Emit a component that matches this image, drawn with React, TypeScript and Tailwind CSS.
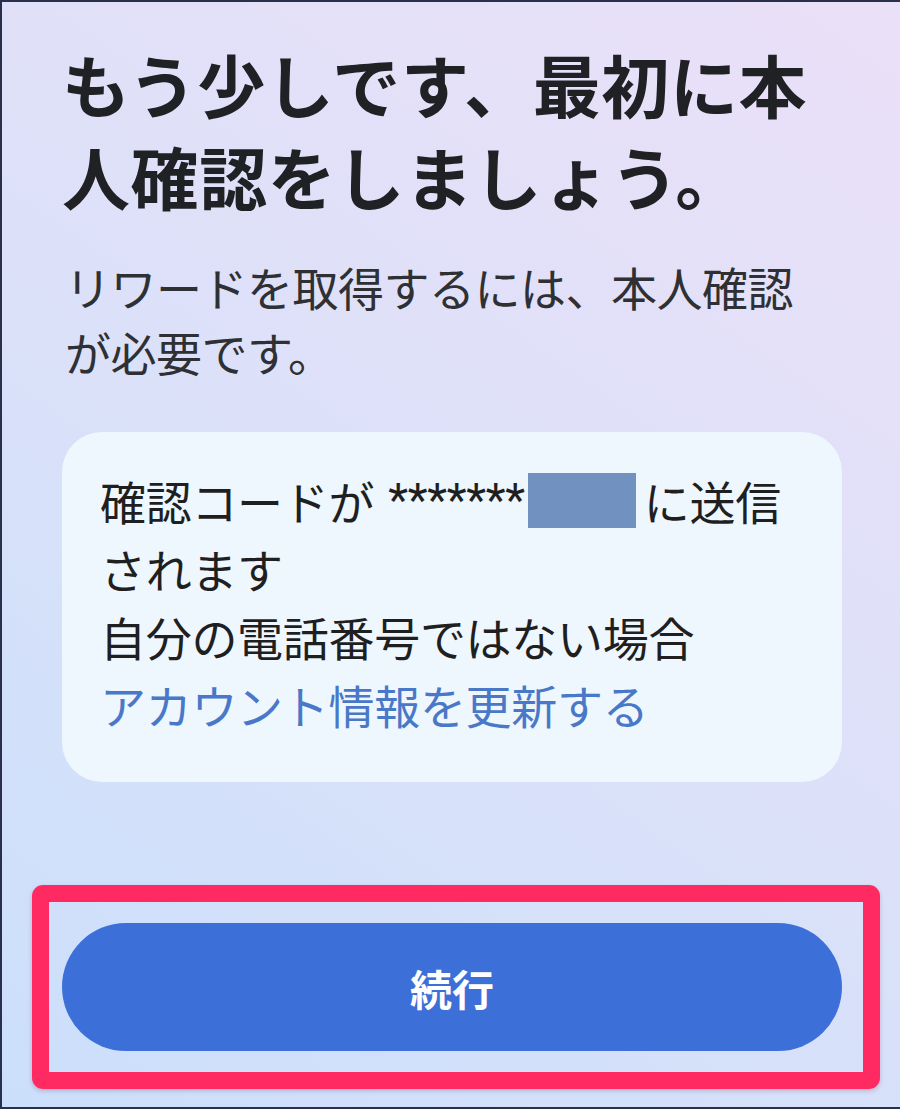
import React from "react";

const jp = "font-['Noto_Sans_CJK_JP','Noto_Sans',sans-serif]";

export default function App() {
  return (
    <div
      className={`${jp} w-[900px] h-[1109px] overflow-hidden border-l-2 border-t-2 border-b-2 border-[#2a2f4c] bg-linear-[215deg] from-[#ebe0f8] via-[#dae1f9] via-55% to-[#cbdffb] flex flex-col`}
    >
      <h1 className="pl-[60px] pt-[36px] text-[68px] leading-[92px] font-bold text-[#202124] tracking-[0.6px]">
        もう少しです、最初に本
        <br />
        人確認をしましょう。
      </h1>
      <p className="mt-[32px] pl-[63px] text-[46px] leading-[65px] text-[#2f3033] tracking-[-0.5px]">
        リワードを取得するには、本人確認
        <br />
        が必要です。
      </p>
      <div className="mt-[48px] ml-[60px] w-[780px] h-[350px] rounded-[40px] bg-[#eef6fe] pl-[38px] pt-[34px] text-[46px] leading-[68px] text-[#1f1f1f] tracking-[-0.3px]">
        <div className="flex items-center whitespace-nowrap">
          <span>確認コードが</span>
          <span className="font-['Roboto',sans-serif] ml-[14px]">*******</span>
          <span className="ml-[3px] inline-block w-[108px] h-[55px] bg-[#7192c0]" />
          <span className="ml-[8px]">に送信</span>
        </div>
        <div>されます</div>
        <div>自分の電話番号ではない場合</div>
        <div className="text-[#4a78c8]">アカウント情報を更新する</div>
      </div>
      <div className="mt-[103px] ml-[30px] w-[848px] rounded-[11px] border-[17px] border-[#ff2a62] pl-[13px] pr-[21px] py-[21px] shadow-[0_2px_4px_rgba(120,40,80,0.25)]">
        <button className="w-[780px] h-[128px] rounded-full bg-[#3d6fd9] text-white text-[42px] font-bold flex items-center justify-center">
          続行
        </button>
      </div>
    </div>
  );
}
